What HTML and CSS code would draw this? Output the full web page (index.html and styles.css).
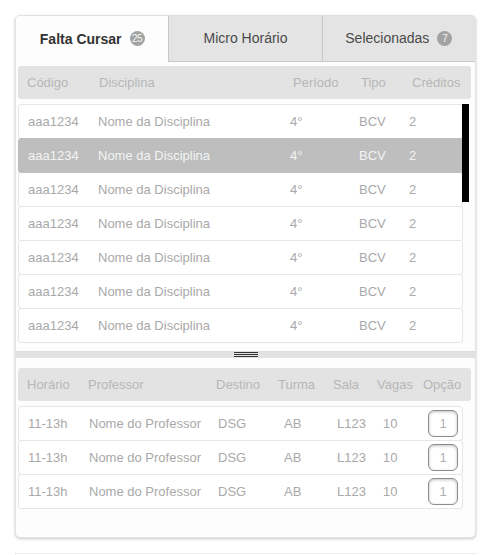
FILE: index.html
```html
<!DOCTYPE html>
<html lang="pt-BR">
<head>
  <meta charset="UTF-8" />
  <meta name="viewport" content="width=device-width, initial-scale=1.0"/>
  <title>Grade de Disciplinas</title>
  <link rel="stylesheet" href="styles.css">
</head>
<body>
  <div class="card">
    <!-- Tabs -->
    <div class="tabs">
      <div class="tab active">Falta Cursar <span class="badge">25</span></div>
      <div class="tab">Micro Horário</div>
      <div class="tab">Selecionadas <span class="badge">7</span></div>
    </div>

    <!-- Disciplinas -->
    <div class="upper">
      <div class="head disc-cols">
        <span>Código</span><span>Disciplina</span><span>Período</span><span>Tipo</span><span>Créditos</span>
      </div>
      <div class="list-wrap">
        <div class="list">
          <div class="row disc-row"><span>aaa1234</span><span>Nome da Disciplina</span><span>4°</span><span>BCV</span><span>2</span></div>
          <div class="row disc-row selected"><span>aaa1234</span><span>Nome da Disciplina</span><span>4°</span><span>BCV</span><span>2</span></div>
          <div class="row disc-row"><span>aaa1234</span><span>Nome da Disciplina</span><span>4°</span><span>BCV</span><span>2</span></div>
          <div class="row disc-row"><span>aaa1234</span><span>Nome da Disciplina</span><span>4°</span><span>BCV</span><span>2</span></div>
          <div class="row disc-row"><span>aaa1234</span><span>Nome da Disciplina</span><span>4°</span><span>BCV</span><span>2</span></div>
          <div class="row disc-row"><span>aaa1234</span><span>Nome da Disciplina</span><span>4°</span><span>BCV</span><span>2</span></div>
          <div class="row disc-row"><span>aaa1234</span><span>Nome da Disciplina</span><span>4°</span><span>BCV</span><span>2</span></div>
        </div>
        <div class="scrollbar"></div>
      </div>
    </div>

    <!-- Splitter -->
    <div class="splitter"><span class="grip"></span></div>

    <!-- Turmas -->
    <div class="lower">
      <div class="head turma-cols">
        <span>Horário</span><span>Professor</span><span>Destino</span><span>Turma</span><span>Sala</span><span>Vagas</span><span>Opção</span>
      </div>
      <div class="list">
        <div class="row turma-row"><span>11-13h</span><span>Nome do Professor</span><span>DSG</span><span>AB</span><span>L123</span><span>10</span><span class="opt">1</span></div>
        <div class="row turma-row"><span>11-13h</span><span>Nome do Professor</span><span>DSG</span><span>AB</span><span>L123</span><span>10</span><span class="opt">1</span></div>
        <div class="row turma-row"><span>11-13h</span><span>Nome do Professor</span><span>DSG</span><span>AB</span><span>L123</span><span>10</span><span class="opt">1</span></div>
      </div>
    </div>
  </div>
  <div class="next-card"></div>
</body>
</html>
```

FILE: styles.css
```css
body {
  font-family: "Liberation Sans", Arial, sans-serif;
  font-size: 13px;
  margin: 0;
  background: #fff;
  color: #a9a9a9;
}

/* Card */
.card {
  box-sizing: border-box;
  width: 461px;
  height: 523px;
  margin: 15px 0 0 15px;
  background: #fdfdfd;
  border: 1px solid #e2e2e2;
  border-radius: 5px;
  box-shadow: 0 1px 3px rgba(0, 0, 0, 0.22);
  overflow: hidden;
}

.next-card {
  width: 461px;
  height: 10px;
  margin: 15px 0 0 15px;
  border-top: 1px solid #ececec;
  border-left: 1px solid #ececec;
}

/* Tabs */
.tabs {
  display: flex;
  height: 46px;
}

.tab {
  flex: 1;
  display: flex;
  align-items: center;
  justify-content: center;
  gap: 8px;
  font-size: 14px;
  color: #4a4a4a;
  background: #e4e4e4;
  border-bottom: 1px solid #c9c9c9;
  border-left: 1px solid #c9c9c9;
  padding-bottom: 1px;
}

.tab.active {
  background: #fdfdfd;
  color: #333;
  font-weight: bold;
  border: none;
}

.badge {
  display: inline-flex;
  align-items: center;
  justify-content: center;
  width: 15px;
  height: 15px;
  border-radius: 50%;
  background: #a2a2a2;
  color: #f4f4f4;
  font-size: 10px;
  font-weight: normal;
  letter-spacing: -0.5px;
}

/* Table headers */
.head {
  display: flex;
  align-items: center;
  height: 33px;
  padding-left: 9px;
  background: #e3e3e3;
  border-radius: 3px;
  color: #b7b7b7;
}

.head span, .row span {
  flex: none;
}

.upper {
  padding: 4px 4px 0 2px;
}

.disc-cols span:nth-child(1) { width: 72px; }
.disc-cols span:nth-child(2) { width: 194px; }
.disc-cols span:nth-child(3) { width: 68px; }
.disc-cols span:nth-child(4) { width: 51px; }

/* Rows */
.list-wrap {
  position: relative;
  margin-top: 5px;
  height: 240px;
}

.list {
  margin-right: 8px;
}

.row {
  display: flex;
  align-items: center;
  height: 33px;
  padding-left: 9px;
  background: #fff;
  border: 1px solid #e6e6e6;
  border-radius: 3px;
  margin-top: -1px;
}

.row:first-child {
  margin-top: 0;
}

.row.selected {
  background: #bebebe;
  border-color: #bebebe;
  color: #f3f3f3;
  position: relative;
}

.disc-row span:nth-child(1) { width: 70px; }
.disc-row span:nth-child(2) { width: 192px; }
.disc-row span:nth-child(3) { width: 69px; }
.disc-row span:nth-child(4) { width: 50px; }

.scrollbar {
  position: absolute;
  top: 0;
  right: 2px;
  width: 7px;
  height: 98px;
  background: #000;
}

/* Splitter */
.splitter {
  display: flex;
  justify-content: center;
  height: 6px;
  margin-top: 7px;
  background: #e2e2e2;
  border-top: 1px solid #dcdcdc;
}

.grip {
  width: 24px;
  height: 1px;
  margin-top: 0;
  background: #333;
  box-shadow: 0 2px 0 #333, 0 4px 0 #333;
}

/* Lower table */
.lower {
  padding: 10px 4px 0 2px;
}

.lower .list {
  margin-top: 5px;
}

.turma-cols span:nth-child(1) { width: 61px; }
.turma-cols span:nth-child(2) { width: 128px; }
.turma-cols span:nth-child(3) { width: 62px; }
.turma-cols span:nth-child(4) { width: 55px; }
.turma-cols span:nth-child(5) { width: 44px; }
.turma-cols span:nth-child(6) { width: 46px; }

.turma-row span:nth-child(1) { width: 61px; }
.turma-row span:nth-child(2) { width: 129px; }
.turma-row span:nth-child(3) { width: 66px; }
.turma-row span:nth-child(4) { width: 53px; }
.turma-row span:nth-child(5) { width: 46px; }
.turma-row span:nth-child(6) { width: 45px; }

.row .opt {
  display: flex;
  align-items: center;
  justify-content: center;
  box-sizing: border-box;
  width: 30px;
  height: 27px;
  border: 1px solid #8c8c8c;
  border-radius: 6px;
  background: #fff;
  box-shadow: inset 0 1px 3px rgba(0, 0, 0, 0.25);
  color: #b0b0b0;
}
```
